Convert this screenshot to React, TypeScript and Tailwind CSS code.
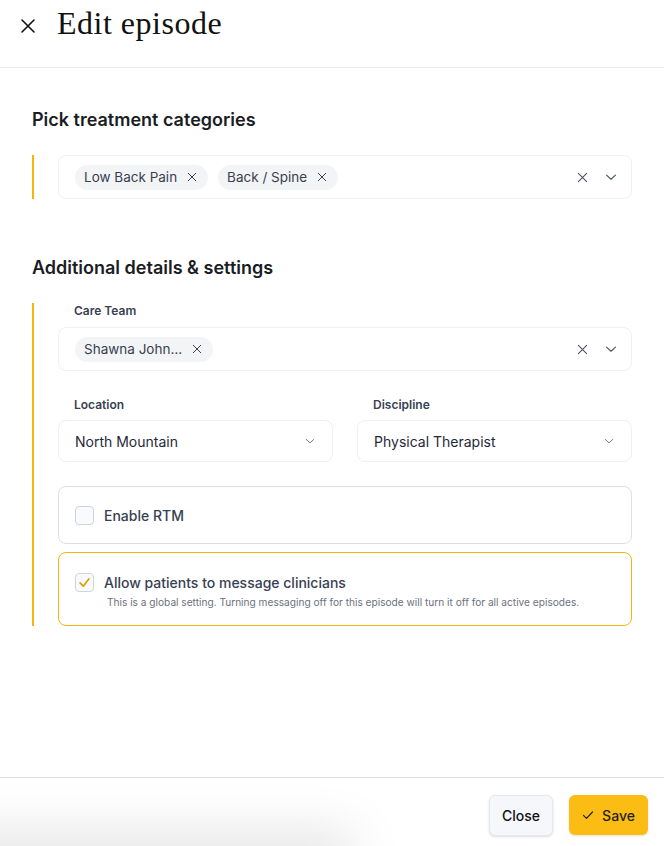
import { useState } from 'react';

type Opt = { label: string };

const XIcon = ({ size = 10, className = '' }: { size?: number; className?: string }) => (
  <svg width={size} height={size} viewBox="0 0 16 16" className={className} fill="none" stroke="currentColor" strokeWidth={1.6} strokeLinecap="round">
    <path d="M2 2L14 14M14 2L2 14" />
  </svg>
);

const Chevron = ({ size = 12, className = '' }: { size?: number; className?: string }) => (
  <svg width={size} height={size} viewBox="0 0 16 16" className={className} fill="none" stroke="currentColor" strokeWidth={1.5} strokeLinecap="round" strokeLinejoin="round">
    <path d="M2 5.5L8 11L14 5.5" />
  </svg>
);

function Chip({ label }: { label: string }) {
  return (
    <span className="flex h-[25px] items-center gap-[10px] rounded-full bg-[#f3f4f6] pl-[9px] pr-[11px] text-[13.5px] text-[#374151]">
      <span className="whitespace-nowrap">{label}</span>
      <XIcon size={10} className="text-[#374151]" />
    </span>
  );
}

function MultiSelect({ values }: { values: Opt[] }) {
  return (
    <div className="flex h-11 items-center rounded-lg border border-[#eef0f3] bg-white pl-4 pr-[14px]">
      <div className="flex flex-1 items-center gap-[10px]">
        {values.map((v) => (
          <Chip key={v.label} label={v.label} />
        ))}
      </div>
      <XIcon size={11} className="mr-[17px] text-[#4b5563]" />
      <Chevron size={12} className="text-[#4b5563]" />
    </div>
  );
}

function Select({ value }: { value: string }) {
  return (
    <div className="flex h-[42px] items-center justify-between rounded-lg border border-[#eef0f3] bg-white pl-4 pr-[17px]">
      <span className="text-[14px] text-[#1f2937]">{value}</span>
      <Chevron size={10} className="text-[#6b7280]" />
    </div>
  );
}

function Checkbox({ checked, onChange }: { checked: boolean; onChange: () => void }) {
  return (
    <button
      type="button"
      onClick={onChange}
      className="flex h-[19px] w-[19px] shrink-0 items-center justify-center rounded-[4px] border border-[#cfd4dc] bg-[#f9fafb]"
    >
      {checked && (
        <svg width="13" height="13" viewBox="0 0 16 16" fill="none" stroke="#e19a00" strokeWidth={2} strokeLinecap="round" strokeLinejoin="round">
          <path d="M2.5 8.5L6.5 12.5L13.5 3.5" />
        </svg>
      )}
    </button>
  );
}

export default function App() {
  const [rtm, setRtm] = useState(false);
  const [messaging, setMessaging] = useState(true);

  return (
    <div className="relative flex h-[846px] w-full flex-col overflow-hidden bg-white font-['Inter',sans-serif] text-[#111827]">
      <header className="flex h-[68px] shrink-0 items-start gap-[21px] border-b border-[#e8ebf0] pl-5 pt-[18px]">
        <XIcon size={16} className="text-[#111]" />
        <h1 className="-mt-[11px] font-['Liberation_Serif',serif] text-[32px] leading-none tracking-[0.5px] text-[#111]">Edit episode</h1>
      </header>

      <main className="flex-1 px-8 pt-[38px]">
        <h2 className="text-[18px] font-semibold leading-7 text-[#1a1d23]">Pick treatment categories</h2>
        <div className="mt-[21px] border-l-2 border-[#f5b50a] pl-6">
          <MultiSelect values={[{ label: 'Low Back Pain' }, { label: 'Back / Spine' }]} />
        </div>

        <h2 className="mt-[55px] text-[18px] font-semibold leading-7 text-[#1a1d23]">Additional details &amp; settings</h2>
        <div className="mt-[21px] border-l-2 border-[#f5b50a] pl-6">
          <label className="block pl-4 text-[12px] font-semibold leading-4 text-[#374151]">Care Team</label>
          <div className="mt-2">
            <MultiSelect values={[{ label: 'Shawna John…' }]} />
          </div>

          <div className="mt-[26px] grid grid-cols-2 gap-6">
            <div>
              <label className="block pl-4 text-[12px] font-semibold leading-4 text-[#374151]">Location</label>
              <div className="mt-[7px]">
                <Select value="North Mountain" />
              </div>
            </div>
            <div>
              <label className="block pl-4 text-[12px] font-semibold leading-4 text-[#374151]">Discipline</label>
              <div className="mt-[7px]">
                <Select value="Physical Therapist" />
              </div>
            </div>
          </div>

          <div className="mt-6 flex h-[58px] items-center gap-[10px] rounded-lg border border-[#dcdfe6] px-4">
            <Checkbox checked={rtm} onChange={() => setRtm(!rtm)} />
            <span className="text-[14px] font-medium text-[#374151]">Enable RTM</span>
          </div>

          <div className="mt-2 flex h-[74px] flex-col rounded-lg border border-[#f5b50a] px-4 pt-[19px]">
            <div className="flex items-center gap-[10px]">
              <Checkbox checked={messaging} onChange={() => setMessaging(!messaging)} />
              <span className="text-[14px] font-medium text-[#374151]">Allow patients to message clinicians</span>
            </div>
            <p className="mt-[2px] pl-[32px] text-[10.15px] text-[#6b7280]">
              This is a global setting. Turning messaging off for this episode will turn it off for all active episodes.
            </p>
          </div>
        </div>
      </main>

      <footer className="flex h-[69px] shrink-0 items-start justify-end gap-4 border-t border-[#dcdcdc] pr-4 pt-[17px]">
        <button type="button" className="h-[41px] w-16 rounded-md border border-[#e5e7eb] bg-[#f5f7fa] text-[14px] font-medium text-[#111] shadow-sm">
          Close
        </button>
        <button type="button" className="flex h-[40px] w-[79px] items-center justify-center gap-2 rounded-md bg-[#fbbc14] text-[14px] font-medium text-[#1f1f1f] shadow-sm">
          <svg width="12" height="12" viewBox="0 0 16 16" fill="none" stroke="currentColor" strokeWidth={1.6} strokeLinecap="round" strokeLinejoin="round">
            <path d="M2 8.5L6 12.5L14 4" />
          </svg>
          Save
        </button>
      </footer>

      <div className="pointer-events-none absolute -bottom-8 -left-16 h-12 w-[420px] rounded-full bg-black/10 blur-xl" />
    </div>
  );
}
